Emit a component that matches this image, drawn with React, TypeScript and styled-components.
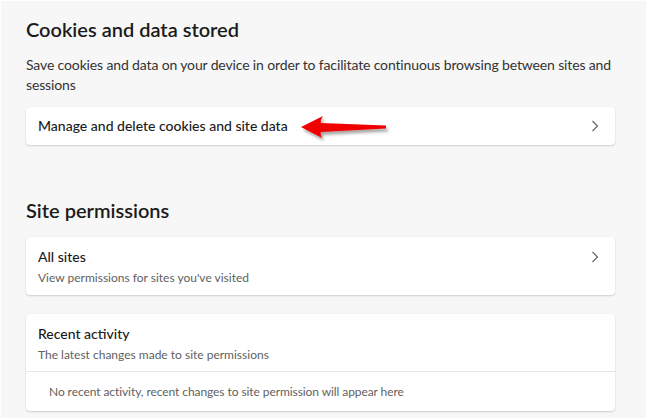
import styled, { createGlobalStyle } from "styled-components";

const GlobalStyle = createGlobalStyle`
  html, body {
    margin: 0;
    background: #ffffff;
  }
  body {
    font-family: "Segoe UI", Lato, "Noto Sans", sans-serif;
    -webkit-font-smoothing: antialiased;
  }
`;

const Page = styled.div`
  margin: 1px 2px 0 1px;
  height: 417px;
  box-sizing: border-box;
  background: #f7f7f7;
  padding: 14px 31px 0 25px;
  display: flex;
  flex-direction: column;
`;

const SectionTitle = styled.h2<{ $gap?: number }>`
  margin: ${({ $gap }) => $gap ?? 0}px 0 0;
  font-size: 20px;
  line-height: 28px;
  font-weight: 600;
  color: #1b1b1b;
`;

const Description = styled.p`
  margin: 12px 0 0;
  font-size: 14px;
  line-height: 20px;
  letter-spacing: -0.14px;
  color: #333333;
`;

const Card = styled.div<{ $gap: number }>`
  position: relative;
  margin-top: ${({ $gap }) => $gap}px;
  background: #ffffff;
  border-radius: 4px;
  box-shadow: 0 1px 2px rgba(0, 0, 0, 0.16), 0 0 1px rgba(0, 0, 0, 0.08);
`;

const LinkRow = styled.div<{ $tall?: boolean }>`
  display: flex;
  align-items: ${({ $tall }) => ($tall ? "flex-start" : "center")};
  justify-content: space-between;
  padding: ${({ $tall }) => ($tall ? "10px 16px 8px 12px" : "0 16px 0 12px")};
  height: ${({ $tall }) => ($tall ? "auto" : "38px")};
`;

const RowText = styled.div`
  display: flex;
  flex-direction: column;
`;

const RowTitle = styled.span`
  font-size: 14px;
  line-height: 20px;
  font-weight: 500;
  color: #1b1b1b;
`;

const RowSub = styled.span`
  margin-top: 2px;
  font-size: 12px;
  line-height: 18px;
  color: #616161;
`;

const Chevron = styled.svg<{ $top?: number }>`
  flex: none;
  width: 8px;
  height: 12px;
  margin-top: ${({ $top }) => $top ?? 0}px;
`;

const Header = styled.div`
  padding: 10px 12px 7px;
  display: flex;
  flex-direction: column;
  border-bottom: 1px solid #e6e6e6;
`;

const Empty = styled.div`
  padding: 0 12px 0 23px;
  height: 39px;
  display: flex;
  align-items: center;
  font-size: 12px;
  letter-spacing: -0.08px;
  color: #5f5f5f;
`;

const Arrow = styled.svg`
  position: absolute;
  left: 274px;
  top: 5px;
  width: 92px;
  height: 30px;
  overflow: visible;
`;

function ChevronIcon({ top }: { top?: number }) {
  return (
    <Chevron viewBox="0 0 8 12" $top={top}>
      <path d="M1.5 1 L6.5 6 L1.5 11" fill="none" stroke="#5f5f5f" strokeWidth="1.1" />
    </Chevron>
  );
}

export default function App() {
  return (
    <>
      <GlobalStyle />
      <Page>
        <SectionTitle>Cookies and data stored</SectionTitle>
        <Description>
          Save cookies and data on your device in order to facilitate continuous browsing between sites and
          sessions
        </Description>
        <Card $gap={12}>
          <LinkRow>
            <RowTitle>Manage and delete cookies and site data</RowTitle>
            <ChevronIcon />
          </LinkRow>
          <Arrow viewBox="0 0 92 30">
            <defs>
              <filter id="arrowShadow" x="-20%" y="-40%" width="140%" height="180%">
                <feDropShadow dx="2" dy="3" stdDeviation="1.6" floodColor="#000" floodOpacity="0.35" />
              </filter>
            </defs>
            <path
              d="M1 15 L23 4 Q20 9 21 11 L86 13.5 L86 16.5 L21 20 Q20 22 22 26 Z"
              fill="#f00000"
              filter="url(#arrowShadow)"
            />
          </Arrow>
        </Card>

        <SectionTitle $gap={51}>Site permissions</SectionTitle>
        <Card $gap={13}>
          <LinkRow $tall>
            <RowText>
              <RowTitle>All sites</RowTitle>
              <RowSub>View permissions for sites you've visited</RowSub>
            </RowText>
            <ChevronIcon top={4} />
          </LinkRow>
        </Card>

        <Card $gap={19}>
          <Header>
            <RowTitle>Recent activity</RowTitle>
            <RowSub>The latest changes made to site permissions</RowSub>
          </Header>
          <Empty>No recent activity, recent changes to site permission will appear here</Empty>
        </Card>
      </Page>
    </>
  );
}
